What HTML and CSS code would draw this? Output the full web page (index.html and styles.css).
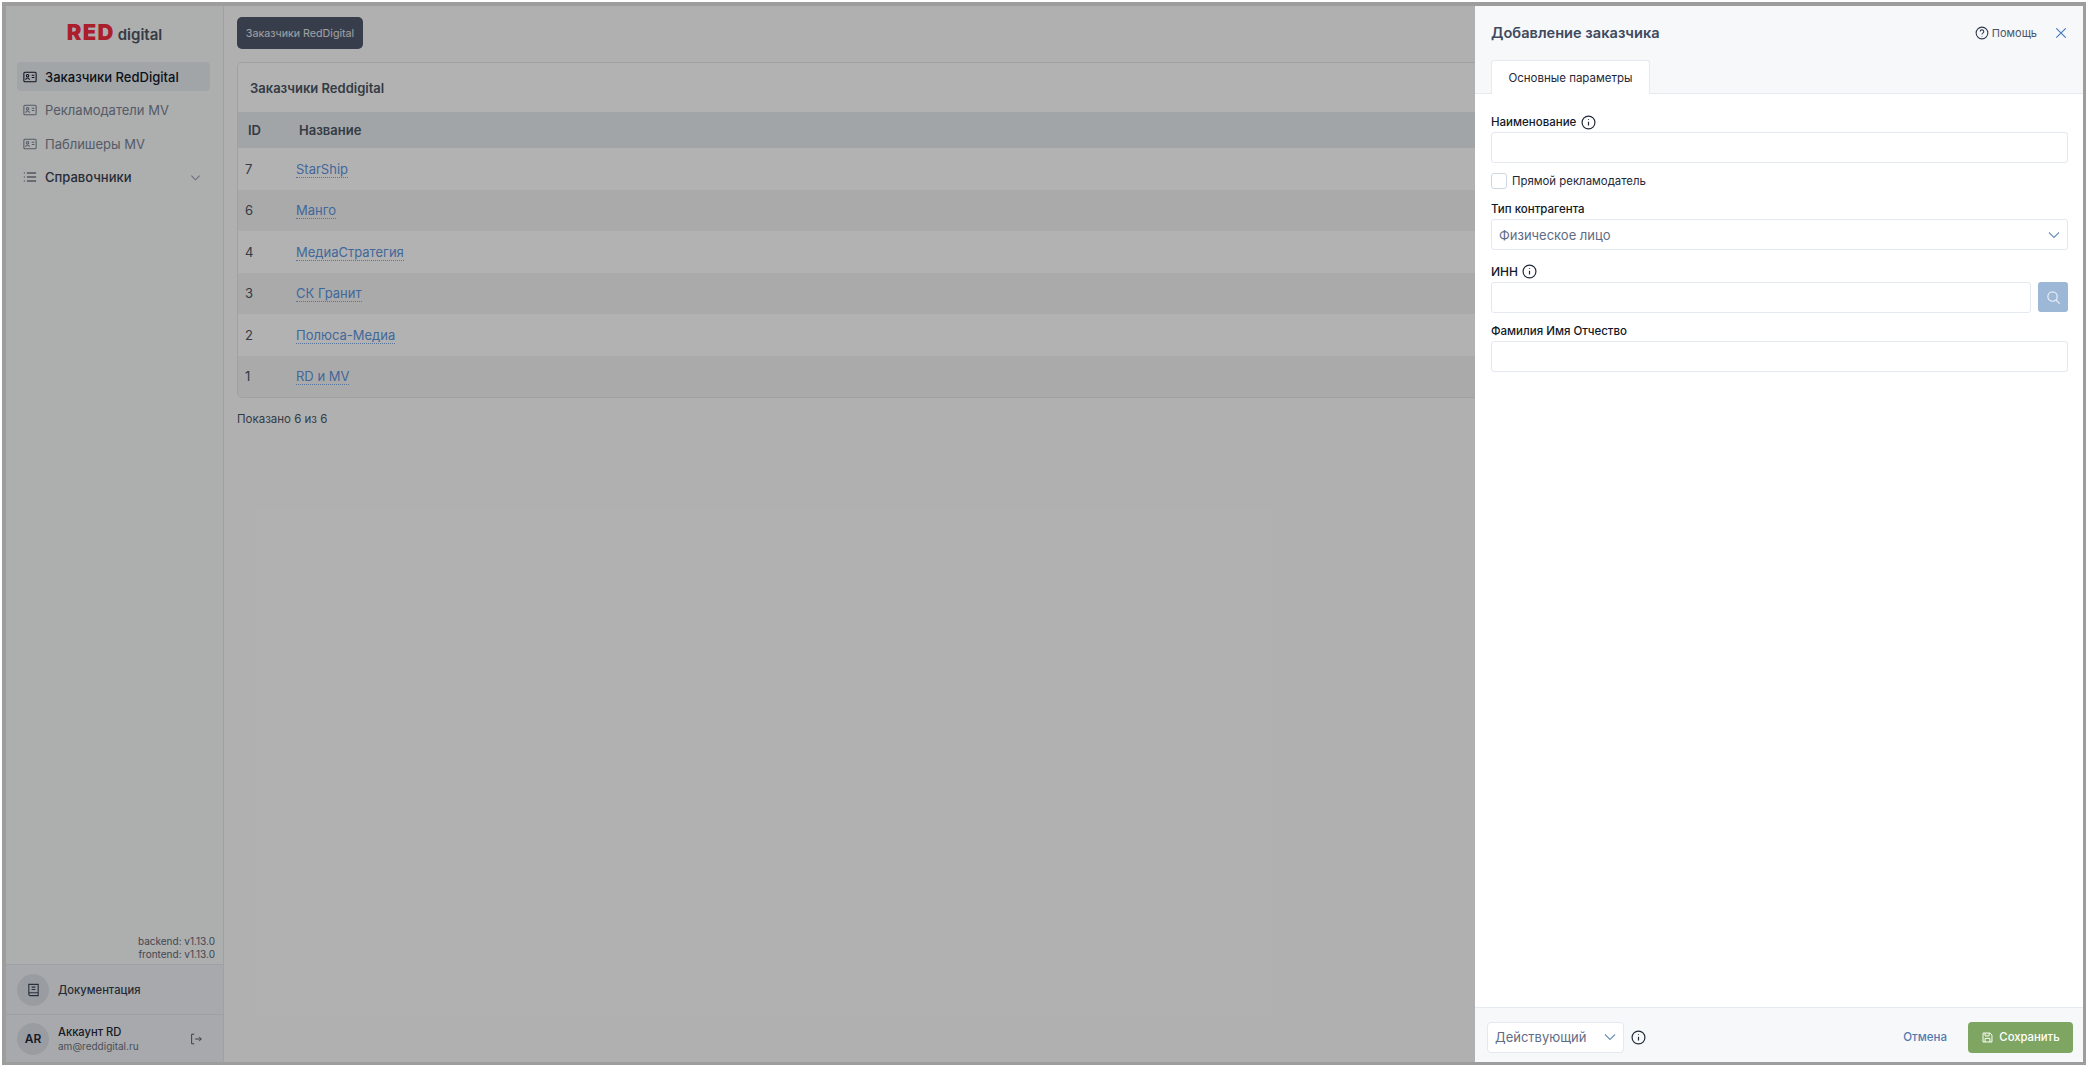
FILE: index.html
```html
<!DOCTYPE html>
<html lang="ru">
<head>
<meta charset="utf-8">
<title>Заказчики RedDigital</title>
<link rel="stylesheet" href="styles.css">
</head>
<body>
<div class="frame">
<div class="app">
  <aside class="sidebar">
    <div class="logo"><span class="logo-red">RED</span><span class="logo-digital">digital</span></div>
    <nav class="nav">
      <a class="nav-item active">
        <svg class="nav-icon" viewBox="0 0 16 16"><rect x="1" y="2.5" width="14" height="11" rx="1.2"/><circle cx="5.2" cy="6.6" r="1.4"/><path d="M3 11.2c.3-1.5 1.2-2.1 2.2-2.1s1.9.6 2.2 2.1M10 6h3M10 8.5h3"/></svg>
        <span>Заказчики RedDigital</span>
      </a>
      <a class="nav-item">
        <svg class="nav-icon" viewBox="0 0 16 16"><rect x="1" y="2.5" width="14" height="11" rx="1.2"/><circle cx="5.2" cy="6.6" r="1.4"/><path d="M3 11.2c.3-1.5 1.2-2.1 2.2-2.1s1.9.6 2.2 2.1M10 6h3M10 8.5h3"/></svg>
        <span>Рекламодатели MV</span>
      </a>
      <a class="nav-item">
        <svg class="nav-icon" viewBox="0 0 16 16"><rect x="1" y="2.5" width="14" height="11" rx="1.2"/><circle cx="5.2" cy="6.6" r="1.4"/><path d="M3 11.2c.3-1.5 1.2-2.1 2.2-2.1s1.9.6 2.2 2.1M10 6h3M10 8.5h3"/></svg>
        <span>Паблишеры MV</span>
      </a>
      <a class="nav-item dark">
        <svg class="nav-icon" viewBox="0 0 16 16"><path d="M4.5 3.5H15M4.5 8H15M4.5 12.5H15M1 3.5h1M1 8h1M1 12.5h1"/></svg>
        <span class="grow">Справочники</span>
        <svg class="nav-chevron" viewBox="0 0 12 12"><path d="M1.5 4l4.5 4.5L10.500 4"/></svg>
      </a>
    </nav>
    <div class="versions"><div>backend: v1.13.0</div><div>frontend: v1.13.0</div></div>
    <div class="side-row">
      <span class="avatar"><svg class="book" viewBox="0 0 16 16"><path d="M3 13V2.500h10V14.500H4.500A1.500 1.500 0 0 1 3 13a1.500 1.500 0 0 1 1.500-1.500H13M6 5.500h4M6 8h4"/></svg></span>
      <span class="doc-label">Документация</span>
    </div>
    <div class="side-row account">
      <span class="avatar initials">AR</span>
      <span class="user"><span class="user-name">Аккаунт RD</span><span class="user-mail">am@reddigital.ru</span></span>
      <svg class="logout" viewBox="0 0 16 16"><path d="M6 2.500H3v11h3M7 8h7M11.500 5.500L14 8l-2.500 2.500"/></svg>
    </div>
  </aside>
  <main class="main">
    <button class="crumb">Заказчики RedDigital</button>
    <section class="card">
      <h2 class="card-title">Заказчики Reddigital</h2>
      <table class="table">
        <thead><tr><th class="col-id">ID</th><th>Название</th></tr></thead>
        <tbody>
          <tr><td>7</td><td><a class="link">StarShip</a></td></tr>
          <tr><td>6</td><td><a class="link">Манго</a></td></tr>
          <tr><td>4</td><td><a class="link">МедиаСтратегия</a></td></tr>
          <tr><td>3</td><td><a class="link">СК Гранит</a></td></tr>
          <tr><td>2</td><td><a class="link">Полюса-Медиа</a></td></tr>
          <tr><td>1</td><td><a class="link">RD и MV</a></td></tr>
        </tbody>
      </table>
    </section>
    <p class="shown">Показано 6 из 6</p>
  </main>
  <div class="overlay"></div>
  <aside class="drawer">
    <header class="drawer-head">
      <div class="drawer-top">
        <h1 class="drawer-title">Добавление заказчика</h1>
        <a class="help">
          <svg class="help-icon" viewBox="0 0 16 16"><circle cx="8" cy="8" r="6.700"/><path d="M6 6.300a2 2 0 1 1 3.200 1.600c-.8.500-1.200 1-1.200 1.800M8 11.400v.5"/></svg>
          <span>Помощь</span>
        </a>
        <svg class="close" viewBox="0 0 14 14"><path d="M1.500 1.500l11 11M12.500 1.500l-11 11"/></svg>
      </div>
      <div class="tabs"><div class="tab">Основные параметры</div></div>
    </header>
    <form class="form">
      <div class="field">
        <label class="label">Наименование <svg class="info" viewBox="0 0 14 14"><circle cx="7" cy="7" r="6"/><path d="M7 6.200v3.600M7 4v.6"/></svg></label>
        <div class="input"></div>
      </div>
      <div class="check-row"><span class="checkbox"></span><span>Прямой рекламодатель</span></div>
      <div class="field">
        <label class="label">Тип контрагента</label>
        <div class="input select"><span>Физическое лицо</span><svg class="chevron" viewBox="0 0 12 12"><path d="M1 3.500l5 5 5-5"/></svg></div>
      </div>
      <div class="field">
        <label class="label inn">ИНН <svg class="info" viewBox="0 0 14 14"><circle cx="7" cy="7" r="6"/><path d="M7 6.200v3.600M7 4v.6"/></svg></label>
        <div class="input-group">
          <div class="input grow"></div>
          <button type="button" class="search"><svg class="search-icon" viewBox="0 0 16 16"><circle cx="7" cy="7" r="5"/><path d="M10.700 10.700L14.500 14.500"/></svg></button>
        </div>
      </div>
      <div class="field">
        <label class="label">Фамилия Имя Отчество</label>
        <div class="input"></div>
      </div>
    </form>
    <footer class="drawer-foot">
      <div class="status"><span>Действующий</span><svg class="chevron" viewBox="0 0 12 12"><path d="M1 3.500l5 5 5-5"/></svg></div>
      <svg class="info foot-info" viewBox="0 0 14 14"><circle cx="7" cy="7" r="6"/><path d="M7 6.200v3.600M7 4v.6"/></svg>
      <a class="cancel">Отмена</a>
      <button type="button" class="save"><svg class="save-icon" viewBox="0 0 16 16"><path d="M2.500 2.500h8.500l2.500 2.500v8.500h-11zM5 2.500v3.500h5V2.500M5 13.500V9h6v4.500"/></svg>Сохранить</button>
    </footer>
  </aside>
</div>
</div>
</body>
</html>
```
FILE: styles.css
```css
* { box-sizing: border-box; }
html, body { margin: 0; height: 100%; }
body {
  padding: 2px 3px 3px 2px;
  background: #fff;
  font-family: Inter, "Noto Sans", sans-serif;
  font-size: 14px;
  color: #374151;
  overflow: hidden;
}
.frame {
  height: 100%;
  padding: 4px 3px 3px 4px;
  background: #9d9d9d;
}
.app {
  position: relative;
  display: flex;
  height: 100%;
  background: #fdfdfd;
  overflow: hidden;
}
.grow { flex: 1; }

/* sidebar */
.sidebar {
  width: 218px;
  flex: none;
  display: flex;
  flex-direction: column;
  background: #f8f9fa;
  border-right: 1px solid #e5e7eb;
}
.logo {
  display: flex;
  align-items: baseline;
  justify-content: center;
  height: 56px;
  padding-top: 14px;
  gap: 3px;
}
.logo-red { font-size: 22px; line-height: 24px; font-weight: 900; color: #f52b3e; letter-spacing: 1.3px; }
.logo-digital { font-size: 15px; font-weight: 600; color: #4b5563; }
.nav { display: flex; flex-direction: column; gap: 4.500px; padding: 0 13px 0 11px; }
.nav-item {
  display: flex;
  align-items: center;
  height: 29px;
  padding: 0 6px;
  gap: 8px;
  border-radius: 4px;
  font-size: 13px;
  font-weight: 400;
  color: #7a8494;
}
.nav-item.active { background: #e8ecf1; color: #111827; font-weight: 500; }
.nav-item.dark { color: #374151; font-weight: 500; }
.nav-icon { width: 14px; height: 14px; fill: none; stroke: currentColor; stroke-width: 1.200; flex: none; }
.nav-chevron { width: 11px; height: 11px; fill: none; stroke: #9aa3af; stroke-width: 1.200; margin-right: 3px; }
.versions {
  margin-top: auto;
  padding: 0 8px 3px 0;
  text-align: right;
  font-size: 10px;
  line-height: 13px;
  color: #5f6774;
}
.side-row {
  display: flex;
  align-items: center;
  height: 50px;
  flex: none;
  padding-left: 11px;
  gap: 9px;
  background: #f1f3f6;
  border-top: 1px solid #e3e6ec;
}
.side-row.account { height: 48px; }
.avatar {
  width: 32px;
  height: 32px;
  flex: none;
  display: flex;
  align-items: center;
  justify-content: center;
  border-radius: 50%;
  background: #dce1e8;
}
.book { width: 15px; height: 15px; fill: none; stroke: #3d4654; stroke-width: 1.200; }
.doc-label { font-size: 11.200px; font-weight: 500; color: #374151; }
.initials { font-size: 12px; font-weight: 600; color: #1f2937; }
.user { display: flex; flex-direction: column; flex: 1; }
.user-name { font-size: 11.200px; line-height: 15px; font-weight: 500; color: #1f2937; }
.user-mail { font-size: 10px; line-height: 13px; color: #6b7280; }
.logout { width: 14px; height: 14px; margin-right: 20px; fill: none; stroke: #4b5563; stroke-width: 1.100; }

/* main */
.main { flex: 1; padding: 11px 12px 0 13px; min-width: 0; }
.crumb {
  display: block;
  width: 126px;
  height: 32px;
  padding: 0;
  border: 0;
  border-radius: 5px;
  background: #4f586b;
  color: #e5e7eb;
  font: 400 10.700px Inter, sans-serif;
}
.card {
  margin-top: 13px;
  border: 1px solid #e5e7eb;
  border-radius: 5px;
  overflow: hidden;
  background: #fff;
}
.card-title { margin: 0; height: 49px; padding-left: 12px; font-size: 13px; font-weight: 600; line-height: 50px; color: #4b5563; }
.table { width: 100%; border-collapse: collapse; }
.table th { height: 36px; padding: 0 0 0 10px; background: #e9ecf0; text-align: left; font-size: 13px; font-weight: 600; color: #4b5563; }
.table .col-id { width: 51px; }
.table td { height: 41.500px; padding: 0 0 0 7px; font-size: 13px; color: #4b5563; }
.table tbody tr:nth-child(even) { background: #f4f4f5; }
.link { color: #5e95de; border-bottom: 1px dotted #7ea8e0; }
.shown { margin: 13px 0 0; font-size: 11.500px; line-height: 16px; color: #4b5563; }

/* overlay + drawer */
.overlay { position: absolute; inset: 0; background: rgba(0, 0, 0, .3); }
.drawer {
  position: absolute;
  top: 0;
  right: 0;
  bottom: 0;
  width: 608px;
  display: flex;
  flex-direction: column;
  background: #fff;
  color: #111827;
}
.drawer-head { background: #f6f8fa; border-bottom: 1px solid #e5e9f0; height: 88px; padding: 0 16px; flex: none; }
.drawer-top { display: flex; align-items: center; height: 54px; }
.drawer-title { flex: 1; margin: 0; font-size: 14.600px; font-weight: 600; color: #3f4a5f; }
.help { display: flex; align-items: center; gap: 3px; font-size: 11px; color: #4a5568; margin-right: 18px; }
.help-icon { width: 14px; height: 14px; fill: none; stroke: #2d3748; stroke-width: 1.200; }
.close { width: 12px; height: 12px; fill: none; stroke: #3f79b8; stroke-width: 1.300; }
.tabs { display: flex; }
.tab {
  width: 159px;
  height: 34px;
  background: #fff;
  border: 1px solid #e5e9f0;
  border-bottom: 0;
  border-radius: 3px 3px 0 0;
  text-align: center;
  font-size: 11.500px;
  line-height: 34px;
  color: #1f2937;
}
.form { flex: 1; padding: 18px 15px 0 16px; display: flex; flex-direction: column; }
.field { display: flex; flex-direction: column; }
.label { display: flex; align-items: center; gap: 5px; height: 20px; font-size: 11.500px; font-weight: 500; color: #111827; }
.label.inn { font-size: 12px; height: 21px; margin-top: 11px; gap: 4px; }
.info { width: 15px; height: 15px; fill: none; stroke: #1f2937; stroke-width: 1.100; }
.input {
  height: 31px;
  border: 1px solid #e4e8f0;
  border-radius: 3px;
  background: #fff;
}
.select { display: flex; align-items: center; justify-content: space-between; padding: 0 7px; font-size: 13px; color: #5f6c85; }
.chevron { width: 12px; height: 12px; fill: none; stroke: #6b8fb8; stroke-width: 1.100; flex: none; }
.check-row { display: flex; align-items: center; gap: 5px; height: 16px; margin: 10px 0 10px; font-size: 11.400px; color: #1f2937; }
.checkbox { width: 16px; height: 16px; border: 1px solid #cfd6e3; border-radius: 3px; flex: none; }
.input-group { display: flex; gap: 7px; }
.search {
  width: 30px;
  height: 30px;
  flex: none;
  padding: 0;
  border: 0;
  border-radius: 3px;
  background: #9db7d6;
  display: flex;
  align-items: center;
  justify-content: center;
}
.search-icon { width: 15px; height: 15px; fill: none; stroke: #e9eff6; stroke-width: 1.300; }
.form .field:last-child { margin-top: 8px; }
.drawer-foot {
  display: flex;
  align-items: center;
  flex: none;
  height: 55px;
  padding: 4px 10px 0 12px;
  background: #f6f8fa;
  border-top: 1px solid #e5e9f0;
}
.status {
  display: flex;
  align-items: center;
  justify-content: space-between;
  width: 137px;
  height: 31px;
  padding: 0 7px;
  background: #fff;
  border: 1px solid #e4e8f0;
  border-radius: 4px;
  font-size: 13px;
  color: #5f6c85;
}
.foot-info { margin-left: 7px; flex: none; }
.cancel { margin-left: auto; font-size: 11.500px; font-weight: 500; color: #4f7bb0; }
.save {
  display: flex;
  align-items: center;
  justify-content: center;
  gap: 5px;
  width: 105px;
  height: 31px;
  margin-left: 21px;
  padding: 0;
  border: 0;
  border-radius: 4px;
  background: #7fa562;
  color: #fff;
  font: 500 11.300px Inter, sans-serif;
}
.save-icon { width: 13px; height: 13px; fill: none; stroke: #fff; stroke-width: 1.200; }
```
